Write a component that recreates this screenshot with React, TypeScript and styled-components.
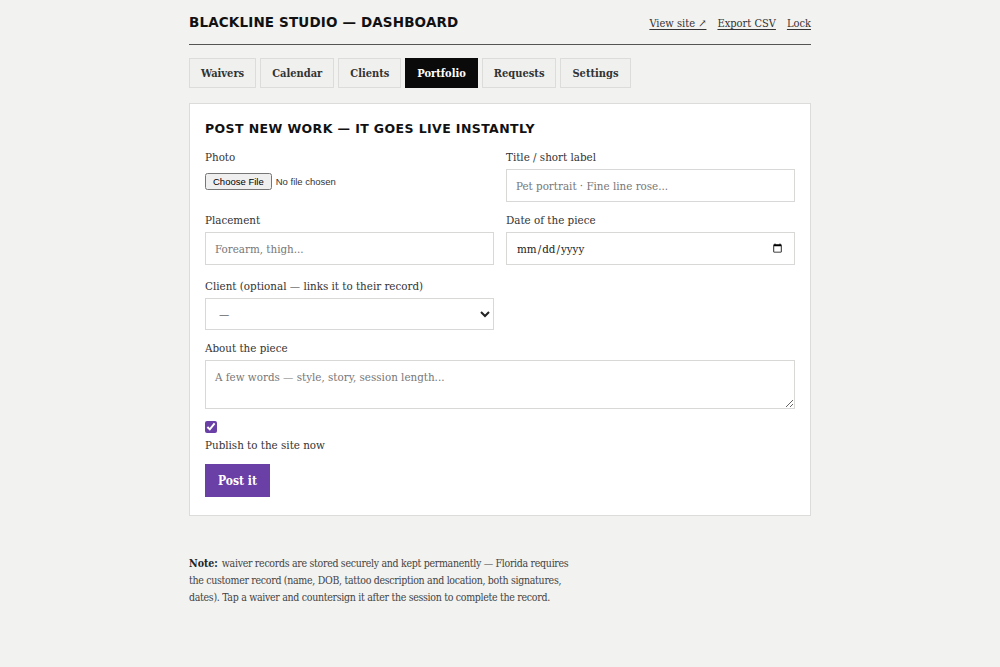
import styled, { createGlobalStyle } from 'styled-components';

const GlobalStyle = createGlobalStyle`
  html, body {
    margin: 0;
    padding: 0;
    background: #f2f2f0;
  }
  body {
    font-family: "DejaVu Serif Condensed", "Liberation Serif", serif;
    color: #222;
  }
`;

const tabs = ['Waivers', 'Calendar', 'Clients', 'Portfolio', 'Requests', 'Settings'];

const noteLines = [
  'the customer record (name, DOB, tattoo description and location, both signatures,',
  'dates). Tap a waiver and countersign it after the session to complete the record.',
];

const App: React.FC = () => {
  return (
    <>
      <GlobalStyle />
      <Page>
        <Header>
          <Brand>Blackline Studio — Dashboard</Brand>
          <HeaderLinks>
            <HeaderLink href="#">View site ↗</HeaderLink>
            <HeaderLink href="#">Export CSV</HeaderLink>
            <HeaderLink href="#">Lock</HeaderLink>
          </HeaderLinks>
        </Header>

        <Tabs>
          {tabs.map((t) => (
            <Tab key={t} $active={t === 'Portfolio'}>{t}</Tab>
          ))}
        </Tabs>

        <Card>
          <CardTitle>Post new work — it goes live instantly</CardTitle>
          <Grid>
            <Field>
              <Label>Photo</Label>
              <FileInput type="file" />
            </Field>
            <Field>
              <Label>Title / short label</Label>
              <Input placeholder="Pet portrait · Fine line rose..." />
            </Field>
            <Field>
              <Label>Placement</Label>
              <Input placeholder="Forearm, thigh..." />
            </Field>
            <Field>
              <Label>Date of the piece</Label>
              <Input type="date" />
            </Field>
            <Field $push>
              <Label>Client (optional — links it to their record)</Label>
              <Select defaultValue="">
                <option value="">—</option>
              </Select>
            </Field>
            <Field />
            <Field $wide>
              <Label>About the piece</Label>
              <TextArea placeholder="A few words — style, story, session length..." />
            </Field>
          </Grid>
          <Check type="checkbox" defaultChecked />
          <CheckLabel>Publish to the site now</CheckLabel>
          <PostButton>Post it</PostButton>
        </Card>

        <Note>
          <NoteLine>
            <NoteLead>Note:</NoteLead>waiver records are stored securely and kept permanently — Florida requires
          </NoteLine>
          {noteLines.map((l) => (
            <NoteLine key={l}>{l}</NoteLine>
          ))}
        </Note>
      </Page>
    </>
  );
};

const Page = styled.div`
  width: 622px;
  margin: 0 auto;
  padding-top: 14px;
  padding-bottom: 60px;
`;

const Header = styled.div`
  display: flex;
  align-items: center;
  justify-content: space-between;
  padding-bottom: 14px;
  border-bottom: 1px solid #555;
`;

const Brand = styled.h1`
  margin: 0;
  font-family: "DejaVu Sans", "Liberation Sans", sans-serif;
  font-size: 13.5px;
  font-weight: 700;
  text-transform: uppercase;
  letter-spacing: 0.15px;
  color: #111;
`;

const HeaderLinks = styled.div`
  display: flex;
  gap: 11px;
  padding-top: 3px;
`;

const HeaderLink = styled.a`
  font-size: 11px;
  color: #333;
  text-decoration: underline;
  text-underline-offset: 2px;
`;

const Tabs = styled.div`
  display: flex;
  gap: 4px;
  margin-top: 13px;
`;

const Tab = styled.button<{ $active?: boolean }>`
  height: 30px;
  padding: 0 11px;
  font-family: "DejaVu Serif Condensed", "Liberation Serif", serif;
  font-size: 11px;
  font-weight: 700;
  color: ${(p) => (p.$active ? '#fff' : '#333')};
  background: ${(p) => (p.$active ? '#0a0a0a' : '#f0f0ee')};
  border: 1px solid ${(p) => (p.$active ? '#0a0a0a' : '#dcdcda')};
  cursor: pointer;
`;

const Card = styled.div`
  margin-top: 15px;
  background: #fff;
  border: 1px solid #dcdcda;
  padding: 17px 15px 18px;
`;

const CardTitle = styled.h2`
  margin: 0 0 13px;
  font-family: "DejaVu Sans", "Liberation Sans", sans-serif;
  font-size: 12.5px;
  font-weight: 700;
  text-transform: uppercase;
  letter-spacing: 0.4px;
  color: #111;
`;

const Grid = styled.div`
  display: grid;
  grid-template-columns: 1fr 1fr;
  column-gap: 12px;
  row-gap: 10px;
`;

const Field = styled.div<{ $wide?: boolean; $push?: boolean }>`
  display: flex;
  flex-direction: column;
  grid-column: ${(p) => (p.$wide ? '1 / -1' : 'auto')};
  margin-top: ${(p) => (p.$push ? '3px' : '0')};
`;

const Label = styled.label`
  font-size: 11.5px;
  color: #333;
  margin-bottom: 4px;
  line-height: 16px;
`;

const controlBase = `
  box-sizing: border-box;
  width: 100%;
  border: 1px solid #d8d8d6;
  background: #fff;
  font-family: "DejaVu Serif Condensed", "Liberation Serif", serif;
  font-size: 11.5px;
  color: #222;
  padding: 0 9px;
  border-radius: 0;
  &::placeholder {
    color: #777;
  }
`;

const Input = styled.input`
  ${controlBase}
  height: 33px;
`;

const FileInput = styled.input`
  font-family: "Liberation Sans", Arial, sans-serif;
  font-size: 9.5px;
  color: #333;
  margin-top: 4px;
`;

const Select = styled.select`
  ${controlBase}
  height: 32px;
`;

const TextArea = styled.textarea`
  ${controlBase}
  height: 49px;
  padding: 9px 9px;
  resize: vertical;
`;

const Check = styled.input`
  display: block;
  margin: 12px 0 0;
  width: 12px;
  height: 12px;
  accent-color: #6a3fa6;
`;

const CheckLabel = styled.div`
  font-size: 11.5px;
  color: #333;
  margin-top: 5px;
`;

const PostButton = styled.button`
  margin-top: 12px;
  height: 33px;
  padding: 0 13px;
  background: #6a3fa6;
  color: #fff;
  border: none;
  font-family: "DejaVu Serif Condensed", "Liberation Serif", serif;
  font-size: 12px;
  font-weight: 700;
  cursor: pointer;
`;

const Note = styled.div`
  margin-top: 39px;
  font-size: 10.5px;
  letter-spacing: -0.3px;
  line-height: 17px;
  color: #444;
`;

const NoteLine = styled.div`
  white-space: nowrap;
`;

const NoteLead = styled.strong`
  color: #222;
  letter-spacing: 0;
  margin-right: 4px;
`;

export default App;
